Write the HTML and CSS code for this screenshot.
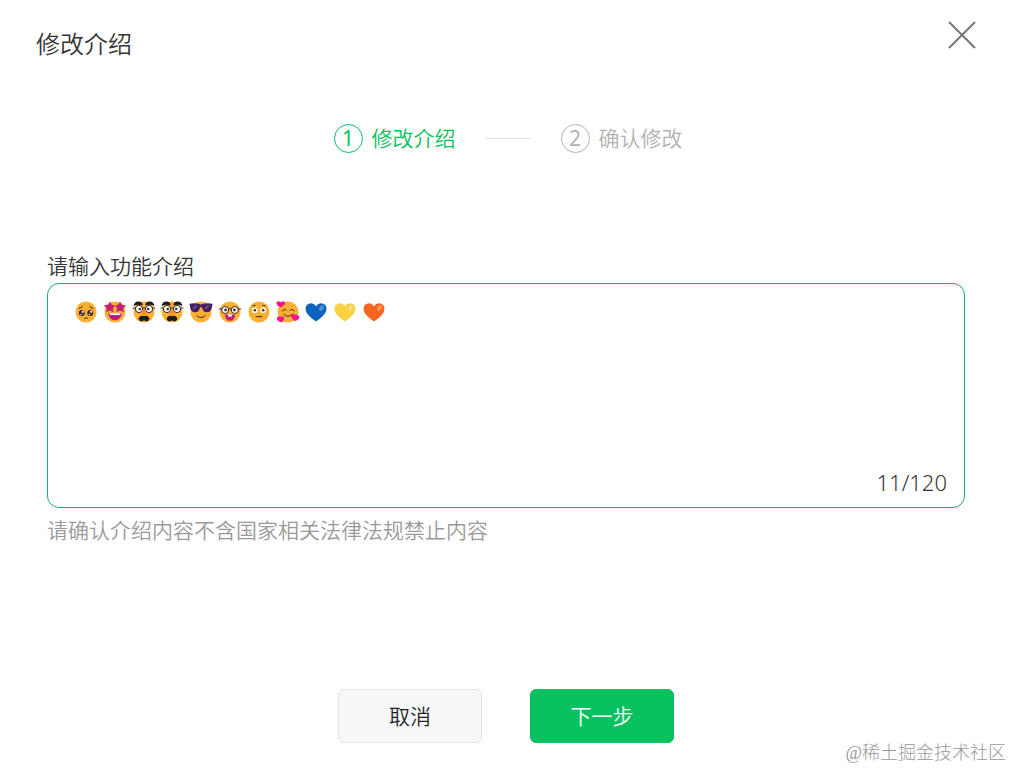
FILE: index.html
```html
<!DOCTYPE html>
<html lang="zh-CN">
<head>
    <meta charset="UTF-8">
    <meta name="viewport" content="width=device-width, initial-scale=1.0">
    <title>修改介绍</title>
    <link rel="stylesheet" href="styles.css">
</head>
<body>

    <div class="dialog">
        <header class="dialog-header">
            <h1>修改介绍</h1>
            <button type="button" class="close" aria-label="关闭">
                <svg viewBox="0 0 28 28"><path d="M1 1L27 27M27 1L1 27"/></svg>
            </button>
        </header>

        <!-- Steps -->
        <ol class="steps">
            <li class="step active"><span class="step-number">1</span>修改介绍</li>
            <li class="step-line" aria-hidden="true"></li>
            <li class="step"><span class="step-number">2</span>确认修改</li>
        </ol>

        <form class="form">
            <label for="intro">请输入功能介绍</label>
            <div class="field">
                <textarea id="intro" maxlength="120"></textarea>

                <!-- Emoji content -->
                <div class="emojis" aria-hidden="true">
                    <!-- pleading -->
                    <svg viewBox="0 0 24 24">
                        <circle class="face" cx="12" cy="12" r="10.5"/>
                        <circle class="dark" cx="7.8" cy="13" r="3"/>
                        <circle class="dark" cx="16.2" cy="13" r="3"/>
                        <circle class="white" cx="8.8" cy="11.8" r="1.1"/>
                        <circle class="white" cx="17.2" cy="11.8" r="1.1"/>
                        <circle class="white" cx="7" cy="14.4" r=".7"/>
                        <circle class="white" cx="15.4" cy="14.4" r=".7"/>
                        <path class="line" d="M5 8.4Q7 8 8.4 6.6M19 8.4Q17 8 15.6 6.6M10.5 18.2Q12 17.2 13.5 18.2"/>
                    </svg>
                    <!-- star eyes -->
                    <svg viewBox="0 0 24 24">
                        <circle class="face" cx="12" cy="12" r="10.5"/>
                        <path class="star" d="M7 1.5L8.8 4.8 12 5.4 9.9 8.3 10.5 12.2 7 10.6 3.2 12.2 3.7 8.3.8 5.4 5 4.8ZM17 1.5L19 4.8 23.2 5.4 20.3 8.3 20.8 12.2 17 10.6 13.5 12.2 14.1 8.3 12 5.4 15.2 4.8Z"/>
                        <path class="mouth" d="M5.3 13H18.7Q18.2 20.2 12 20.2T5.3 13Z"/>
                        <path class="white" d="M6.3 13.2H17.7L17 15H7Z"/>
                    </svg>
                    <!-- disguised -->
                    <svg viewBox="0 0 24 24">
                        <circle class="face" cx="12" cy="12" r="10.5"/>
                        <path class="black" d="M1.5 6Q2 1.6 6.5 1.4 10.5 1.4 10.7 5.2 6 3.8 1.5 6ZM22.5 6Q22 1.6 17.5 1.4 13.5 1.4 13.3 5.2 18 3.8 22.5 6Z"/>
                        <path class="line" d="M1 8H4M20 8H23M10 8H14"/>
                        <circle class="lens" cx="7" cy="9" r="3.6"/>
                        <circle class="lens" cx="17" cy="9" r="3.6"/>
                        <circle class="dark" cx="7.8" cy="9" r="1.3"/>
                        <circle class="dark" cx="16.2" cy="9" r="1.3"/>
                        <path class="nose" d="M12 8.5Q14.8 12 14.5 14.5 12 17 9.5 14.5 9.2 12 12 8.5Z"/>
                        <path class="black" d="M12 16.2Q15.5 15 17 17.8 18.2 19.8 15.5 21.2 13 21.4 12 20.3 11 21.4 8.5 21.2 5.8 19.8 7 17.8 8.5 15 12 16.2Z"/>
                    </svg>
                    <!-- disguised -->
                    <svg viewBox="0 0 24 24">
                        <circle class="face" cx="12" cy="12" r="10.5"/>
                        <path class="black" d="M1.5 6Q2 1.6 6.5 1.4 10.5 1.4 10.7 5.2 6 3.8 1.5 6ZM22.5 6Q22 1.6 17.5 1.4 13.5 1.4 13.3 5.2 18 3.8 22.5 6Z"/>
                        <path class="line" d="M1 8H4M20 8H23M10 8H14"/>
                        <circle class="lens" cx="7" cy="9" r="3.6"/>
                        <circle class="lens" cx="17" cy="9" r="3.6"/>
                        <circle class="dark" cx="7.8" cy="9" r="1.3"/>
                        <circle class="dark" cx="16.2" cy="9" r="1.3"/>
                        <path class="nose" d="M12 8.5Q14.8 12 14.5 14.5 12 17 9.5 14.5 9.2 12 12 8.5Z"/>
                        <path class="black" d="M12 16.2Q15.5 15 17 17.8 18.2 19.8 15.5 21.2 13 21.4 12 20.3 11 21.4 8.5 21.2 5.8 19.8 7 17.8 8.5 15 12 16.2Z"/>
                    </svg>
                    <!-- sunglasses -->
                    <svg viewBox="0 0 24 24">
                        <circle class="face" cx="12" cy="12" r="10.5"/>
                        <path class="shades" d="M.5 3.8Q6 2.2 12 4.4 18 2.2 23.5 3.8L23 7Q22.5 12.3 17.5 12.3 14 12 12.8 7.2H11.2Q10 12 6.5 12.3 1.5 12.3 1 7Z"/>
                        <path class="glare" d="M4 9L7.5 5.5M16 9L19.5 5.5"/>
                        <path class="line" d="M7.7 15.7Q12 19.6 16.3 15.7"/>
                    </svg>
                    <!-- nerd -->
                    <svg viewBox="0 0 24 24">
                        <circle class="face" cx="12" cy="12" r="10.5"/>
                        <path class="line" d="M1.2 9H4M22.8 9H20M10.5 9Q12 8 13.5 9"/>
                        <circle class="lens" cx="7.2" cy="10" r="3.5"/>
                        <circle class="lens" cx="16.8" cy="10" r="3.5"/>
                        <circle class="dark" cx="7.6" cy="10" r="1.4"/>
                        <circle class="dark" cx="16.4" cy="10" r="1.4"/>
                        <path class="mouth" d="M6.8 14.7H17.2Q16.5 20.8 12 20.8T6.8 14.7Z"/>
                        <path class="white" d="M10 14.7H14V16.5H10Z"/>
                    </svg>
                    <!-- flushed -->
                    <svg viewBox="0 0 24 24">
                        <circle class="face" cx="12" cy="12" r="10.5"/>
                        <circle class="white" cx="7.8" cy="10.2" r="2.8"/>
                        <circle class="white" cx="16.2" cy="10.2" r="2.8"/>
                        <circle class="dark" cx="7.8" cy="10.2" r="1.3"/>
                        <circle class="dark" cx="16.2" cy="10.2" r="1.3"/>
                        <path class="line" d="M5.8 5.8Q7 5 8.3 5.3M18.2 5.8Q17 5 15.7 5.3M9 16.7H15"/>
                    </svg>
                    <!-- smiling with hearts -->
                    <svg viewBox="0 0 24 24">
                        <circle class="face" cx="12" cy="12" r="10.5"/>
                        <path class="line" d="M6.5 11Q8 7.7 10.3 10.5M14 10.5Q16 7.7 18 11M8 14.3Q12 18.5 16 14.3"/>
                        <path class="heart" d="M4.7 7.5Q-.5 5 .7 2.3 2.4.2 4.8 2.2 7.3.1 9 2.4 9.8 5 4.7 7.5ZM5.7 22.5Q.3 21 .8 17.8 2.2 15.3 4.8 16.7 7.3 15.5 8.2 18 8.5 20 5.7 22.5ZM18.3 21Q13.8 17 15.5 14.5 17.7 12.5 19.4 15.1 22.6 14.3 23.4 17 23.3 20 18.3 21Z"/>
                    </svg>
                    <svg viewBox="0 0 24 24">
                        <path class="blue" d="M12 21.5Q1.5 14.5 1.5 8.7 2 3.4 7 3.3 10.3 3.3 12 6.2 13.7 3.3 17 3.3 22 3.4 22.5 8.7 22.5 14.5 12 21.5Z"/>
                        <ellipse class="shine" cx="17.5" cy="8" rx="2" ry="3" transform="rotate(35 17.5 8)"/>
                    </svg>
                    <svg viewBox="0 0 24 24">
                        <path class="yellow" d="M12 21.5Q1.5 14.5 1.5 8.7 2 3.4 7 3.3 10.3 3.3 12 6.2 13.7 3.3 17 3.3 22 3.4 22.5 8.7 22.5 14.5 12 21.5Z"/>
                        <ellipse class="shine" cx="17.5" cy="8" rx="2" ry="3" transform="rotate(35 17.5 8)"/>
                    </svg>
                    <svg viewBox="0 0 24 24">
                        <path class="orange" d="M12 21.5Q1.5 14.5 1.5 8.7 2 3.4 7 3.3 10.3 3.3 12 6.2 13.7 3.3 17 3.3 22 3.4 22.5 8.7 22.5 14.5 12 21.5Z"/>
                        <ellipse class="shine" cx="17.5" cy="8" rx="2" ry="3" transform="rotate(35 17.5 8)"/>
                    </svg>
                </div>
                <span class="counter">11/120</span>
            </div>
            <p class="hint">请确认介绍内容不含国家相关法律法规禁止内容</p>

            <div class="actions">
                <button type="button" class="btn">取消</button>
                <button type="submit" class="btn primary">下一步</button>
            </div>
        </form>

        <span class="watermark">@稀土掘金技术社区</span>
    </div>

</body>
</html>
```
FILE: styles.css
```css
/* General styles */
* {
    box-sizing: border-box;
}

body {
    font-family: "Noto Sans", "Noto Sans CJK SC", sans-serif;
    font-weight: 350;
    margin: 0;
    background-color: #fff;
    color: #353535;
}

.dialog {
    position: relative;
    min-height: 100vh;
}

.dialog-header {
    display: flex;
    justify-content: space-between;
    align-items: flex-start;
    padding: 21px 36px 0;
}

h1 {
    margin: 0;
    padding-top: 5px;
    font-size: 24px;
    line-height: 36px;
    font-weight: 350;
}

.close {
    width: 28px;
    height: 28px;
    padding: 0;
    border: none;
    background: none;
    cursor: pointer;
}

.close svg {
    display: block;
    fill: none;
    stroke: #777;
    stroke-width: 2;
}

/* Steps */
.steps {
    display: flex;
    justify-content: center;
    align-items: center;
    gap: 30px;
    margin: 60px 0 0;
    padding: 0 0 0 4px;
    list-style: none;
    font-size: 21px;
    line-height: 32px;
}

.step {
    display: flex;
    align-items: center;
    gap: 9px;
    color: #b2b2b2;
}

.step-number {
    display: flex;
    justify-content: center;
    align-items: center;
    width: 29px;
    height: 29px;
    border: 1px solid #b2b2b2;
    border-radius: 50%;
    font-weight: 400;
}

.step.active {
    color: #07c160;
}

.step.active .step-number {
    border-color: #07c160;
}

.step-line {
    width: 45px;
    height: 1px;
    background-color: #e0e0e0;
}

/* Form */
.form {
    padding: 96px 47px 26px;
    font-size: 21px;
    line-height: 32px;
}

.form label {
    display: block;
    padding-bottom: 1px;
}

.field {
    position: relative;
}

.field textarea {
    display: block;
    width: 100%;
    height: 225px;
    padding: 12px 26px;
    border: 1px solid #1aad6b;
    border-radius: 12px;
    outline: none;
    resize: none;
    background: none;
    font: inherit;
    color: inherit;
}

.emojis {
    position: absolute;
    top: 17px;
    left: 27px;
    display: flex;
    justify-content: space-between;
    width: 312px;
    pointer-events: none;
}

.emojis svg {
    width: 24px;
    height: 24px;
}

.counter {
    position: absolute;
    right: 18px;
    bottom: 10px;
    font-size: 22px;
}

.hint {
    margin: 6px 0 0;
    color: #9a9a9a;
}

/* Buttons */
.actions {
    display: flex;
    justify-content: center;
    gap: 48px;
    margin-top: 143px;
}

.btn {
    width: 144px;
    height: 54px;
    padding: 0;
    border: 1px solid #e2e4e7;
    border-radius: 6px;
    background-color: #f6f7f9;
    color: #1f1f1f;
    font: inherit;
    cursor: pointer;
}

.btn.primary {
    border-color: #07c160;
    background-color: #07c160;
    color: #fff;
}

.watermark {
    position: absolute;
    right: 6px;
    bottom: 2px;
    font-family: "Liberation Serif", "Noto Sans CJK SC", serif;
    font-size: 18px;
    font-weight: 300;
    line-height: 28px;
    color: #999;
}

/* Emoji colours */
.face {
    fill: #fbb034;
}

.dark {
    fill: #402a32;
}

.black {
    fill: #1c1c1c;
}

.white {
    fill: #fff;
}

.line {
    fill: none;
    stroke: #402a32;
    stroke-width: 1;
    stroke-linecap: round;
}

.lens {
    fill: #fff;
    stroke: #33292c;
    stroke-width: 1;
}

.nose {
    fill: #f59320;
}

.star {
    fill: #c81e78;
}

.mouth {
    fill: #bb1d80;
}

.shades {
    fill: #43235f;
}

.glare {
    stroke: #7b529b;
    stroke-width: 1.5;
}

.heart {
    fill: #f5168a;
}

.blue {
    fill: #0b63bd;
}

.yellow {
    fill: #fbd041;
}

.orange {
    fill: #f4661f;
}

.shine {
    fill: #fff;
    opacity: 0.3;
}
```
